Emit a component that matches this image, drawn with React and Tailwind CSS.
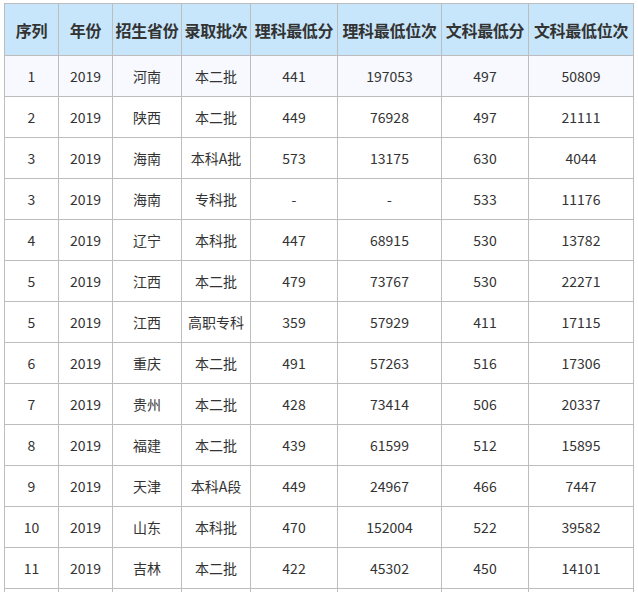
const headers = ['序列', '年份', '招生省份', '录取批次', '理科最低分', '理科最低位次', '文科最低分', '文科最低位次']

const rows = [
  ['1', '2019', '河南', '本二批', '441', '197053', '497', '50809'],
  ['2', '2019', '陕西', '本二批', '449', '76928', '497', '21111'],
  ['3', '2019', '海南', '本科A批', '573', '13175', '630', '4044'],
  ['3', '2019', '海南', '专科批', '-', '-', '533', '11176'],
  ['4', '2019', '辽宁', '本科批', '447', '68915', '530', '13782'],
  ['5', '2019', '江西', '本二批', '479', '73767', '530', '22271'],
  ['5', '2019', '江西', '高职专科', '359', '57929', '411', '17115'],
  ['6', '2019', '重庆', '本二批', '491', '57263', '516', '17306'],
  ['7', '2019', '贵州', '本二批', '428', '73414', '506', '20337'],
  ['8', '2019', '福建', '本二批', '439', '61599', '512', '15895'],
  ['9', '2019', '天津', '本科A段', '449', '24967', '466', '7447'],
  ['10', '2019', '山东', '本科批', '470', '152004', '522', '39582'],
  ['11', '2019', '吉林', '本二批', '422', '45302', '450', '14101'],
  ['', '', '', '', '', '', '', ''],
]

const font = { fontFamily: '"Noto Sans CJK SC", "Noto Sans", sans-serif' }

export default function App() {
  return (
    <div className="h-[592px] w-[638px] overflow-hidden bg-white pl-[4px] pt-[3px]" style={font}>
      <div className="grid w-[630px] grid-cols-[54px_54px_69px_69px_87px_104px_87px_105px] border-l border-t border-[#bdbdbd] text-[#333]">
        {headers.map((h) => (
          <div
            key={h}
            className="flex h-[52px] items-center justify-center whitespace-nowrap border-b border-r border-[#bdbdbd] bg-[#c8e6fb] text-[16px] font-bold tracking-[-0.3px]"
          >
            {h}
          </div>
        ))}
        {rows.map((r, i) =>
          r.map((c, j) => (
            <div
              key={i + '-' + j}
              className={
                'flex h-[41px] items-center justify-center whitespace-nowrap border-b border-r border-[#bdbdbd] text-[14px] ' +
                (i === 0 ? 'bg-[#f7f9fe]' : 'bg-white')
              }
            >
              {c}
            </div>
          ))
        )}
      </div>
    </div>
  )
}
